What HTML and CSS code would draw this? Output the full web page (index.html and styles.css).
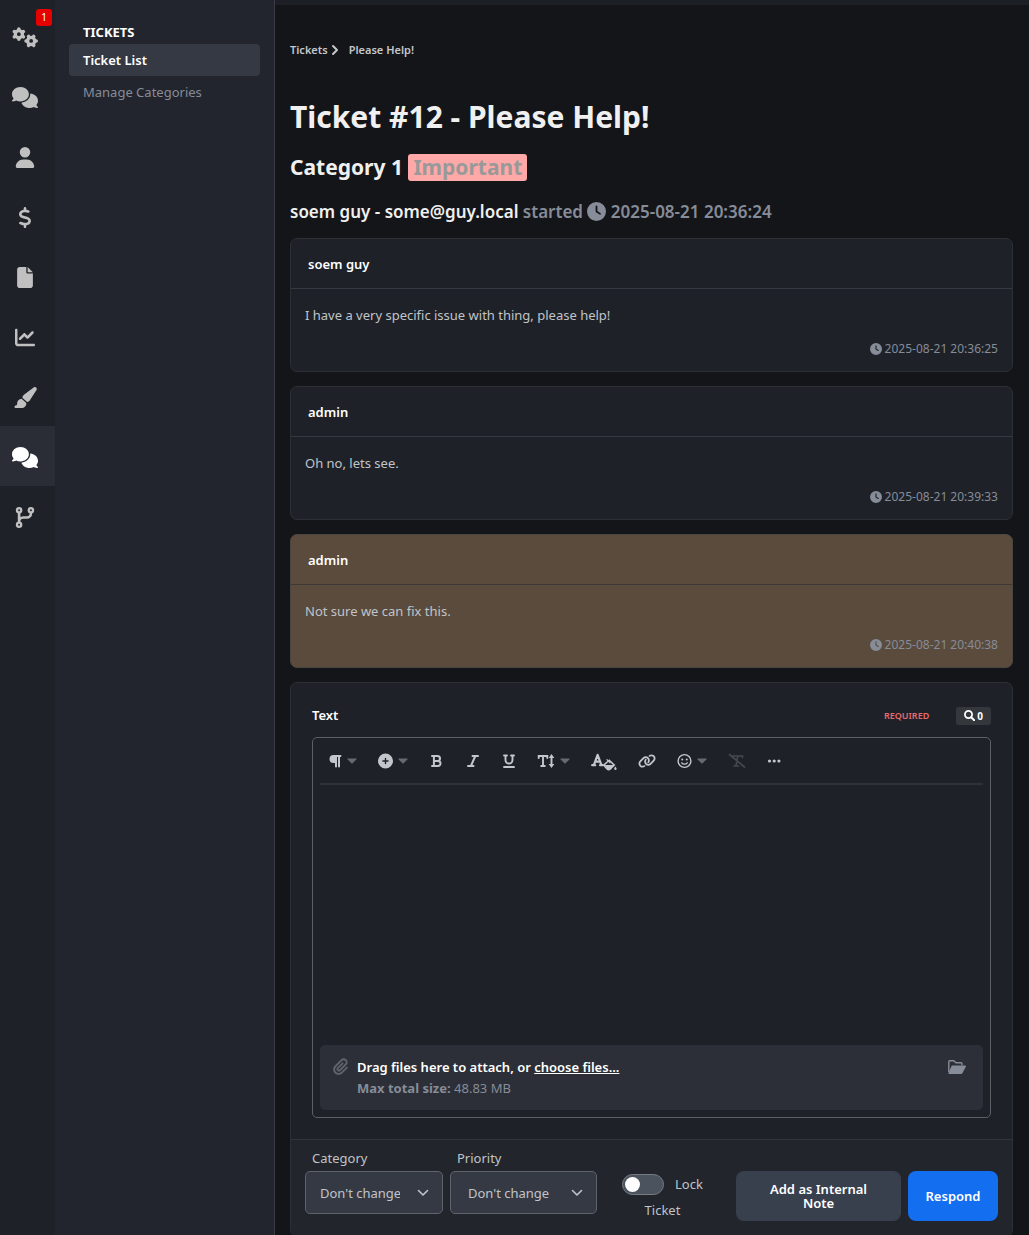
FILE: index.html
```html
<!DOCTYPE html>
<html lang="en">
<head>
<meta charset="utf-8">
<meta name="viewport" content="width=device-width, initial-scale=1">
<title>Ticket #12 - Please Help!</title>
<link rel="stylesheet" href="styles.css">
</head>
<body>
<svg class="sprite" aria-hidden="true">
  <symbol id="i-gears" viewBox="0 0 25 20">
    <g fill="none" stroke="currentColor">
      <circle cx="6.6" cy="6.8" r="3.400" stroke-width="3.200"/>
      <path stroke-width="3.400" stroke-linecap="round" d="M6.600 2.600V1.900M6.600 11v.7M10.200 4.700l.7-.4M10.200 8.900l.7.4M3 4.700l-.7-.4M3 8.900l-.7.4"/>
      <circle cx="18.4" cy="13.3" r="3.400" stroke-width="3.200"/>
      <path stroke-width="3.400" stroke-linecap="round" d="M14.200 13.300h-.7M22.600 13.300h.7M16.300 9.700l-.4-.7M20.500 9.700l.4-.7M16.300 16.900l-.4.7M20.500 16.900l.4.7"/>
    </g>
  </symbol>
  <symbol id="i-comments" viewBox="0 0 640 512"><path d="M208 352c114.900 0 208-78.800 208-176S322.900 0 208 0S0 78.800 0 176c0 38.600 14.700 74.300 39.600 103.400c-3.500 9.400-8.700 17.700-14.200 24.700c-4.800 6.200-9.700 11-13.300 14.300c-1.800 1.600-3.300 2.900-4.300 3.700c-.5 .4-.9 .7-1.100 .8l-.2 .2C1 327.200-1.400 334.400 .8 340.900S9.100 352 16 352c21.800 0 43.800-5.600 62.100-12.500c9.200-3.500 17.800-7.400 25.200-11.400C134.100 343.300 169.800 352 208 352zM448 176c0 112.300-99.100 196.900-216.500 207C255.800 457.400 336.400 512 432 512c38.200 0 73.900-8.700 104.700-23.900c7.500 4 16 7.900 25.200 11.400c18.300 6.900 40.300 12.500 62.100 12.500c6.900 0 13.100-4.500 15.200-11.100c2.100-6.600-.2-13.800-5.800-17.900l-.2-.2c-.2-.2-.6-.4-1.100-.8c-1-.8-2.500-2-4.300-3.700c-3.600-3.300-8.500-8.100-13.300-14.300c-5.500-7-10.700-15.400-14.200-24.700c24.900-29 39.600-64.700 39.600-103.400c0-92.800-84.900-168.900-192.600-175.500c.4 5.100 .6 10.300 .6 15.500z"/></symbol>
  <symbol id="i-user" viewBox="0 0 448 512"><path d="M224 256A128 128 0 1 0 224 0a128 128 0 1 0 0 256zm-45.700 48C79.800 304 0 383.800 0 482.300C0 498.700 13.300 512 29.700 512H418.300c16.400 0 29.700-13.300 29.700-29.700C448 383.800 368.200 304 269.700 304H178.300z"/></symbol>
  <symbol id="i-dollar" viewBox="0 0 320 512"><path d="M160 0c17.700 0 32 14.300 32 32V67.700c1.600 .2 3.100 .4 4.700 .7c.4 .1 .7 .1 1.100 .2l48 8.800c17.400 3.200 28.900 19.900 25.700 37.200s-19.900 28.900-37.200 25.700l-47.500-8.700c-31.300-4.600-58.900-1.500-78.300 6.200s-27.200 18.300-29 28.100c-2 10.700-.5 16.700 1.200 20.400c1.800 3.900 5.500 8.300 12.800 13.200c16.300 10.700 41.300 17.700 73.700 26.300l2.900 .8c28.600 7.600 63.600 16.800 89.600 33.800c14.200 9.300 27.600 21.900 35.900 39.500c8.500 17.900 10.300 37.900 6.400 59.200c-6.900 38-33.100 63.400-65.600 76.700c-13.700 5.600-28.600 9.200-44.400 11V480c0 17.700-14.300 32-32 32s-32-14.300-32-32V445.100c-.4-.1-.9-.1-1.300-.2l-.2 0 0 0c-24.400-3.800-64.500-14.300-91.500-26.300c-16.100-7.200-23.400-26.100-16.200-42.200s26.100-23.400 42.200-16.200c20.900 9.300 55.300 18.500 75.200 21.600c31.900 4.700 58.200 2 76-5.300c16.900-6.900 24.600-16.900 26.800-28.900c1.900-10.600 .4-16.700-1.300-20.400c-1.900-4-5.600-8.400-13-13.300c-16.400-10.700-41.500-17.700-74-26.300l-2.800-.7 0 0C119.400 279.300 84.400 270 58.400 253c-14.200-9.300-27.500-22-35.800-39.600c-8.400-17.900-10.100-37.900-6.100-59.200C23.700 116 52.300 91.200 84.800 78.300c13.300-5.300 27.900-8.900 43.200-11V32c0-17.700 14.300-32 32-32z"/></symbol>
  <symbol id="i-file" viewBox="0 0 384 512"><path d="M0 64C0 28.700 28.700 0 64 0H224V128c0 17.700 14.300 32 32 32H384V448c0 35.300-28.700 64-64 64H64c-35.300 0-64-28.700-64-64V64zm384 64H256V0L384 128z"/></symbol>
  <symbol id="i-chart" viewBox="0 0 512 512"><path d="M64 64c0-17.700-14.300-32-32-32S0 46.300 0 64V400c0 44.200 35.800 80 80 80H480c17.700 0 32-14.300 32-32s-14.300-32-32-32H80c-8.800 0-16-7.200-16-16V64zm406.600 86.600c12.500-12.500 12.500-32.800 0-45.300s-32.800-12.500-45.300 0L320 210.700l-57.400-57.400c-12.500-12.500-32.800-12.500-45.300 0l-112 112c-12.500 12.500-12.500 32.800 0 45.300s32.800 12.500 45.300 0L240 221.300l57.400 57.400c12.500 12.500 32.800 12.500 45.300 0l128-128z"/></symbol>
  <symbol id="i-brush" viewBox="0 0 576 512"><path d="M339.300 367.100c27.300-3.900 51.900-19.400 67.200-42.900L568.200 74.100c12.600-19.500 9.400-45.300-7.600-61.200S517.700-4.400 499.100 9.600L262.400 187.200c-24 18-38.200 46.100-38.400 76.100L339.300 367.100zm-19.600 25.400l-116-104.400C143.900 290.300 96 339.600 96 400c0 3.900 .2 7.800 .6 11.600C98.400 429.100 86.400 448 68.800 448H64c-17.700 0-32 14.300-32 32s14.300 32 32 32H208c61.900 0 112-50.100 112-112c0-2.500-.1-5-.2-7.500z"/></symbol>
  <symbol id="i-branch" viewBox="0 0 448 512"><g fill="none" stroke="currentColor" stroke-width="56"><circle cx="80" cy="80" r="52"/><circle cx="368" cy="80" r="52"/><circle cx="80" cy="432" r="52"/><path stroke-width="64" d="M80 132V380M368 132v28c0 53-43 96-96 96H176c-53 0-96 43-96 96"/></g></symbol>
  <symbol id="i-clock" viewBox="0 0 512 512"><path d="M256 0a256 256 0 1 1 0 512A256 256 0 1 1 256 0zM232 120V256c0 8 4 15.500 10.700 20l96 64c11 7.400 25.900 4.400 33.300-6.700s4.400-25.900-6.700-33.300L280 243.200V120c0-13.300-10.700-24-24-24s-24 10.700-24 24z"/></symbol>
  <symbol id="i-angle" viewBox="0 0 8 12"><path d="M2 2l4 4-4 4" fill="none" stroke="currentColor" stroke-width="2" stroke-linecap="round" stroke-linejoin="round"/></symbol>
  <symbol id="i-caret" viewBox="0 0 10 6"><path d="M1 .5h8c.6 0 .8.6.4 1L5.600 5.300a.9.9 0 0 1-1.200 0L.6 1.500C.2 1.100.4.5 1 .5z"/></symbol>
  <symbol id="i-down" viewBox="0 0 12 8"><path d="M1.500 1.500L6 6l4.500-4.500" fill="none" stroke="currentColor" stroke-width="1.600" stroke-linecap="round" stroke-linejoin="round"/></symbol>
  <symbol id="i-paragraph" viewBox="0 0 14 16"><path d="M5.500 2h7a1 1 0 0 1 0 2H12v9.500a1 1 0 0 1-2 0V4H9v9.500a1 1 0 0 1-2 0V10H5.500a4 4 0 0 1 0-8z"/></symbol>
  <symbol id="i-plus" viewBox="0 0 512 512"><path d="M256 512A256 256 0 1 0 256 0a256 256 0 1 0 0 512zM232 344V280H168c-13.300 0-24-10.700-24-24s10.700-24 24-24h64V168c0-13.300 10.700-24 24-24s24 10.700 24 24v64h64c13.300 0 24 10.700 24 24s-10.700 24-24 24H280v64c0 13.300-10.700 24-24 24s-24-10.700-24-24z"/></symbol>
  <symbol id="i-bold" viewBox="0 0 13 16"><path d="M2 3h5.500a2.500 2.500 0 0 1 0 5H4M7.500 8H8a2.500 2.500 0 0 1 0 5H2M3.900 3v10" fill="none" stroke="currentColor" stroke-width="2" stroke-linecap="round"/></symbol>
  <symbol id="i-italic" viewBox="0 0 16 16"><path d="M7.500 3H13M3 13h5.500M10.300 3L5.900 13" fill="none" stroke="currentColor" stroke-width="2" stroke-linecap="round"/></symbol>
  <symbol id="i-underline" viewBox="0 0 14 16"><path d="M2 2.500h3M9 2.500h3M3.500 2.500V7a3.500 3.500 0 0 0 7 0V2.500M2 14h10" fill="none" stroke="currentColor" stroke-width="1.900" stroke-linecap="round"/></symbol>
  <symbol id="i-height" viewBox="0 0 17 16"><path d="M1.200 5V3h8.600v2M5.500 3v10M3.700 13h3.600M14 4v8" fill="none" stroke="currentColor" stroke-width="1.900" stroke-linecap="round"/><path d="M14 1l2.800 4h-5.600zM14 15l2.800-4h-5.600z"/></symbol>
  <symbol id="i-color" viewBox="0 0 26 20"><path d="M1.200 14.200h3M9 14.200h3M2.800 14.200L6.600 3.800 10.500 14.200M4.200 10.700h4.800" fill="none" stroke="currentColor" stroke-width="2.200" stroke-linecap="round" stroke-linejoin="round"/><path d="M18.300 9.300l5 4.800-4.200 4c-.8.800-2 .8-2.800 0L13.800 15.500c-.7-.7-.7-1.700 0-2.400z" fill="none" stroke="currentColor" stroke-width="1.500"/><path d="M13.500 14h9.500l-4 4.200c-.8.800-2 .8-2.800 0zM15.200 8.800l.9-.9 3.800 3.800-.9.900zM24.400 15.500c.8 1.100 1.200 1.700 1.200 2.200a1.200 1.200 0 0 1-2.400 0c0-.5.4-1.100 1.200-2.200z"/></symbol>
  <symbol id="i-link" viewBox="0 0 640 512"><path d="M579.800 267.700c56.500-56.500 56.500-148 0-204.500c-50-50-128.800-56.500-186.300-15.400l-1.600 1.100c-14.400 10.300-17.700 30.300-7.400 44.600s30.300 17.700 44.600 7.400l1.600-1.100c32.100-22.900 76-19.300 103.800 8.600c31.500 31.500 31.500 82.500 0 114L422.300 334.800c-31.500 31.500-82.500 31.500-114 0c-27.900-27.900-31.500-71.800-8.600-103.800l1.100-1.600c10.300-14.400 6.900-34.400-7.400-44.600s-34.400-6.900-44.600 7.400l-1.100 1.600C206.500 251.200 213 330 263 380c56.500 56.500 148 56.500 204.500 0L579.800 267.700zM60.200 244.300c-56.500 56.500-56.500 148 0 204.500c50 50 128.800 56.500 186.300 15.400l1.600-1.100c14.400-10.300 17.700-30.300 7.400-44.600s-30.300-17.700-44.600-7.400l-1.600 1.100c-32.100 22.900-76 19.300-103.800-8.600C74 372 74 321 105.500 289.500L217.700 177.200c31.500-31.500 82.500-31.500 114 0c27.900 27.900 31.500 71.800 8.600 103.900l-1.100 1.600c-10.300 14.400-6.900 34.400 7.400 44.600s34.400 6.900 44.600-7.400l1.100-1.600C433.500 260.800 427 182 377 132c-56.500-56.500-148-56.500-204.500 0L60.200 244.300z"/></symbol>
  <symbol id="i-smile" viewBox="0 0 16 16"><circle cx="8" cy="8" r="6.800" fill="none" stroke="currentColor" stroke-width="1.500"/><circle cx="5.600" cy="6.400" r="1.100"/><circle cx="10.400" cy="6.400" r="1.100"/><path d="M5 10c1.500 1.900 4.500 1.900 6 0" fill="none" stroke="currentColor" stroke-width="1.400" stroke-linecap="round"/></symbol>
  <symbol id="i-clear" viewBox="0 0 18 16"><path d="M4.500 4.500V3h10v1.500M9.800 3L8 13M6 13h4.500M1.500 1.500l15 12.500" fill="none" stroke="currentColor" stroke-width="1.700" stroke-linecap="round"/></symbol>
  <symbol id="i-dots" viewBox="0 0 14 16"><circle cx="2.500" cy="8" r="1.600"/><circle cx="7.200" cy="8" r="1.600"/><circle cx="11.900" cy="8" r="1.600"/></symbol>
  <symbol id="i-search" viewBox="0 0 11 11"><circle cx="4.500" cy="4.500" r="3.600" fill="none" stroke="currentColor" stroke-width="1.700"/><path d="M7.200 7.200l3 3" stroke="currentColor" stroke-width="2" stroke-linecap="round"/></symbol>
  <symbol id="i-clip" viewBox="0 0 448 512"><path d="M364.200 83.800c-24.400-24.400-64-24.400-88.400 0l-184 184c-42.100 42.100-42.100 110.300 0 152.400s110.300 42.100 152.400 0l152-152c10.900-10.900 28.700-10.900 39.600 0s10.900 28.700 0 39.600l-152 152c-64 64-167.600 64-231.600 0s-64-167.600 0-231.600l184-184c46.300-46.300 121.300-46.300 167.600 0s46.300 121.300 0 167.600l-176 176c-28.600 28.600-75 28.600-103.600 0s-28.600-75 0-103.600l144-144c10.900-10.900 28.700-10.900 39.600 0s10.900 28.700 0 39.600l-144 144c-6.700 6.700-6.700 17.700 0 24.400s17.700 6.700 24.400 0l176-176c24.400-24.400 24.400-64 0-88.400z"/></symbol>
  <symbol id="i-folder" viewBox="0 0 18 14"><path d="M.8 12V1.800c0-.6.400-1 1-1h4l2 2H13c.6 0 1 .4 1 1v1.400" fill="none" stroke="currentColor" stroke-width="1.400"/><path d="M4.600 5.500H17c.8 0 1.200.7.800 1.300l-3.300 6.300c-.3.600-.8.900-1.400.9H1c-.5 0-.8-.4-.5-.9l3-7c.2-.4.600-.6 1.100-.6z"/></symbol>
</svg>

<div class="app">
  <nav class="rail" aria-label="Main">
    <a class="rail-item" href="#" aria-label="Settings, 1 notification"><svg class="icon gears"><use href="#i-gears"/></svg><span class="rail-badge">1</span></a>
    <a class="rail-item" href="#" aria-label="Discussions"><svg class="icon wide"><use href="#i-comments"/></svg></a>
    <a class="rail-item" href="#" aria-label="Users"><svg class="icon"><use href="#i-user"/></svg></a>
    <a class="rail-item" href="#" aria-label="Payments"><svg class="icon"><use href="#i-dollar"/></svg></a>
    <a class="rail-item" href="#" aria-label="Pages"><svg class="icon"><use href="#i-file"/></svg></a>
    <a class="rail-item" href="#" aria-label="Statistics"><svg class="icon"><use href="#i-chart"/></svg></a>
    <a class="rail-item" href="#" aria-label="Appearance"><svg class="icon wide"><use href="#i-brush"/></svg></a>
    <a class="rail-item active" href="#" aria-label="Tickets" aria-current="page"><svg class="icon wide"><use href="#i-comments"/></svg></a>
    <a class="rail-item" href="#" aria-label="Versions"><svg class="icon"><use href="#i-branch"/></svg></a>
  </nav>

  <nav class="submenu" aria-label="Tickets">
    <div class="submenu-title">TICKETS</div>
    <a class="submenu-link active" href="#">Ticket List</a>
    <a class="submenu-link" href="#">Manage Categories</a>
  </nav>

  <main class="content">
    <nav class="crumbs" aria-label="Breadcrumb">
      <a href="#">Tickets</a><svg class="crumb-sep"><use href="#i-angle"/></svg><a href="#">Please Help!</a>
    </nav>
    <h1 class="title">Ticket #12 - Please Help!</h1>
    <h2 class="category">Category 1 <span class="priority">Important</span></h2>
    <h3 class="started"><strong>soem guy - some@guy.local</strong> started <svg class="clock"><use href="#i-clock"/></svg> <time>2025-08-21 20:36:24</time></h3>

    <article class="card message">
      <header class="message-author">soem guy</header>
      <p class="message-text">I have a very specific issue with thing, please help!</p>
      <footer class="message-time"><svg class="clock"><use href="#i-clock"/></svg><time>2025-08-21 20:36:25</time></footer>
    </article>
    <article class="card message">
      <header class="message-author">admin</header>
      <p class="message-text">Oh no, lets see.</p>
      <footer class="message-time"><svg class="clock"><use href="#i-clock"/></svg><time>2025-08-21 20:39:33</time></footer>
    </article>
    <article class="card message internal">
      <header class="message-author">admin</header>
      <p class="message-text">Not sure we can fix this.</p>
      <footer class="message-time"><svg class="clock"><use href="#i-clock"/></svg><time>2025-08-21 20:40:38</time></footer>
    </article>

    <form class="card reply">
      <div class="reply-body">
        <div class="reply-head">
          <label class="reply-label" for="text">Text</label>
          <span class="required">REQUIRED</span>
          <button class="preview" type="button" aria-label="Search, 0"><svg class="search"><use href="#i-search"/></svg>0</button>
        </div>
        <div class="editor">
          <div class="toolbar" role="toolbar">
            <button class="tool" type="button" aria-label="Format"><svg class="w14"><use href="#i-paragraph"/></svg><svg class="caret"><use href="#i-caret"/></svg></button>
            <button class="tool" type="button" aria-label="Insert"><svg class="w15"><use href="#i-plus"/></svg><svg class="caret"><use href="#i-caret"/></svg></button>
            <button class="tool" type="button" aria-label="Bold"><svg class="w15"><use href="#i-bold"/></svg></button>
            <button class="tool" type="button" aria-label="Italic"><svg class="w16"><use href="#i-italic"/></svg></button>
            <button class="tool" type="button" aria-label="Underline"><svg class="w14"><use href="#i-underline"/></svg></button>
            <button class="tool" type="button" aria-label="Size"><svg class="w18"><use href="#i-height"/></svg><svg class="caret"><use href="#i-caret"/></svg></button>
            <button class="tool" type="button" aria-label="Color"><svg class="color"><use href="#i-color"/></svg></button>
            <button class="tool" type="button" aria-label="Link"><svg class="w18"><use href="#i-link"/></svg></button>
            <button class="tool" type="button" aria-label="Emoji"><svg class="w15"><use href="#i-smile"/></svg><svg class="caret"><use href="#i-caret"/></svg></button>
            <button class="tool" type="button" aria-label="Clear formatting" disabled><svg class="w18"><use href="#i-clear"/></svg></button>
            <button class="tool" type="button" aria-label="More"><svg class="w14"><use href="#i-dots"/></svg></button>
          </div>
          <textarea class="editor-text" id="text"></textarea>
          <div class="dropzone">
            <svg class="clip"><use href="#i-clip"/></svg>
            <div class="drop-text">
              <div class="drop-main">Drag files here to attach, or <a href="#">choose files...</a></div>
              <div class="drop-size"><b>Max total size:</b> 48.83 MB</div>
            </div>
            <button class="browse" type="button" aria-label="Browse files"><svg class="folder"><use href="#i-folder"/></svg></button>
          </div>
        </div>
      </div>
      <div class="reply-footer">
        <div class="field field-category">
          <label for="category">Category</label>
          <div class="select-wrap"><select id="category"><option>Don't change</option></select><svg class="down"><use href="#i-down"/></svg></div>
        </div>
        <div class="field field-priority">
          <label for="priority">Priority</label>
          <div class="select-wrap"><select id="priority"><option>Don't change</option></select><svg class="down"><use href="#i-down"/></svg></div>
        </div>
        <div class="lock"><input class="switch" type="checkbox" role="switch" id="lock"><label for="lock">Lock Ticket</label></div>
        <button class="btn btn-note" type="button">Add as Internal Note</button>
        <button class="btn btn-send" type="submit">Respond</button>
      </div>
    </form>
  </main>
</div>
</body>
</html>
```
FILE: styles.css
```css
* { box-sizing: border-box; }

body {
  margin: 0;
  background: #141518;
  color: #c0c4c9;
  font-family: "Noto Sans", "Open Sans", sans-serif;
  font-size: 13px;
  line-height: 20px;
}

a { color: inherit; text-decoration: none; }
button, select, textarea { font: inherit; color: inherit; }
button { padding: 0; border: 0; background: none; }
svg { fill: currentColor; flex: none; }
.sprite { position: absolute; width: 0; height: 0; }

.app { display: flex; min-height: 100vh; }

/* Icon rail */
.rail { flex: none; width: 55px; padding-top: 6px; background: #1e2128; }
.rail-item {
  position: relative;
  display: flex;
  align-items: center;
  justify-content: center;
  height: 60px;
  padding: 3px 5px 0 0;
  color: #c0c0c0;
}
.rail-item.active { background: #2a2d35; color: #fff; }
.icon { width: 20px; height: 21px; }
.icon.wide { width: 26px; }
.icon.gears { width: 26px; }
.rail-badge {
  position: absolute;
  top: 3px;
  right: 3px;
  width: 16px;
  border-radius: 3px;
  background: #e60000;
  color: #fff;
  font-size: 10px;
  line-height: 17px;
  text-align: center;
}

/* Section menu */
.submenu {
  flex: none;
  width: 220px;
  padding: 20px 14px;
  border-right: 1px solid #3a3d44;
  background: #22252d;
}
.submenu-title { padding: 0 14px; color: #fff; font-weight: 700; line-height: 24px; }
.submenu-link {
  display: block;
  padding: 1px 14px 0;
  border-radius: 4px;
  color: #868c98;
  line-height: 31px;
}
.submenu-link.active { background: #353944; color: #fff; font-weight: 600; }

/* Main column */
.content {
  flex: 1;
  min-width: 0;
  padding: 35px 16px 0 15px;
  border-top: 5px solid #1d1f27;
}
.crumbs { display: flex; align-items: center; color: #c4c7cb; font-size: 11px; font-weight: 600; }
.crumb-sep { width: 8px; height: 12px; margin: 0 10px 0 3px; }
.title { margin: 36px 0 0; color: #f0f0f0; font-size: 30px; font-weight: 700; line-height: 42px; }
.category { margin: 15px 0 0; color: #f0f0f0; font-size: 21px; font-weight: 700; line-height: 28px; }
.priority {
  display: inline-block;
  padding: 0 5px;
  border-radius: 3px;
  background: #ffa8a8;
  color: #999;
  line-height: 27px;
}
.started { margin: 20px 0 15px; color: #868c98; font-size: 17px; font-weight: 600; line-height: 22px; }
.started strong { color: #f0f0f0; font-weight: 600; }
.started .clock { width: 19px; height: 19px; vertical-align: -3px; }

.card { border: 1px solid #2c2f36; border-radius: 7px; background: #1e2127; }
.message { margin-bottom: 14px; }
.message-author {
  padding: 15px 17px 14px;
  border-bottom: 1px solid #363941;
  color: #fff;
  font-weight: 600;
}
.message-text { margin: 0; padding: 16px 14px 0; }
.message-time {
  display: flex;
  align-items: center;
  justify-content: flex-end;
  gap: 3px;
  padding: 14px 14px 12px;
  color: #868c98;
  font-size: 12px;
}
.message-time .clock { width: 12px; height: 12px; }
.message.internal { border-color: #4b4640; background: #5a4b3d; }
.message.internal .message-author { border-color: #3c3835; }

/* Reply form */
.reply-body { padding: 20px 21px 21px; }
.reply-head { display: flex; align-items: center; margin-bottom: 9px; line-height: 25px; }
.reply-label { flex: 1; color: #fff; font-weight: 600; }
.required { margin-right: 27px; color: #e86a6e; font-size: 9px; font-weight: 600; }
.preview {
  display: flex;
  align-items: center;
  gap: 2px;
  padding: 0 8px;
  border-radius: 3px;
  background: #34373c;
  color: #fff;
  font-size: 10px;
  font-weight: 700;
  line-height: 18px;
}
.search { width: 11px; height: 11px; }

.editor { padding: 7px; border: 1px solid #5b5f66; border-radius: 5px; background: #1e2127; }
.toolbar {
  display: flex;
  gap: 21px;
  height: 40px;
  padding: 0 8px;
  border-bottom: 2px solid #2e3138;
  color: #c3c7cb;
}
.tool { display: flex; align-items: center; gap: 5px; height: 31px; }
.tool svg { height: 16px; }
.tool:disabled { color: #44484e; }
.w14 { width: 14px; }
.w15 { width: 15px; }
.w16 { width: 16px; }
.w18 { width: 18px; }
.tool .color { width: 26px; height: 20px; }
.tool .caret { width: 10px; height: 6px; color: #666a70; }
.editor-text {
  display: block;
  width: 100%;
  height: 260px;
  padding: 10px;
  border: 0;
  outline: 0;
  background: transparent;
  resize: none;
}
.dropzone { display: flex; align-items: flex-start; padding: 12px 17px 11px 13px; border-radius: 5px; background: #2c2f37; color: #868c98; }
.clip { width: 15px; height: 17px; margin: 1px 9px 0 0; color: #5f646d; }
.drop-text { flex: 1; line-height: 21px; }
.drop-main { color: #fff; font-weight: 600; }
.drop-main a { text-decoration: underline; }
.folder { display: block; width: 18px; height: 14px; margin-top: 3px; }

.reply-footer {
  display: flex;
  align-items: flex-start;
  gap: 7px;
  padding: 8px 14px 14px;
  border-top: 1px solid #32353c;
  border-radius: 0 0 7px 7px;
  background: #22252b;
}
.field label { display: block; padding-left: 7px; line-height: 20px; }
.field-category { flex: 0 1 138px; }
.field-priority { flex: 0 1 147px; }
.select-wrap { position: relative; margin-top: 3px; }
.select-wrap select {
  width: 100%;
  height: 43px;
  padding: 0 42px 0 14px;
  border: 1px solid #5f636b;
  border-radius: 5px;
  background: #353944;
  appearance: none;
}
.field-priority select { padding-left: 17px; }
.down { position: absolute; top: 18px; right: 14px; width: 12px; height: 8px; pointer-events: none; }
.lock { flex: 1 1 100px; padding: 0 14px 0 6px; margin-top: 24px; text-align: center; line-height: 24px; }
.switch {
  width: 42px;
  height: 21px;
  margin: 0 11px 3px 0;
  padding: 2px;
  border: 1px solid #777c83;
  border-radius: 11px;
  background: #4a535e;
  appearance: none;
  vertical-align: middle;
}
.switch::before { content: ""; display: block; width: 15px; height: 15px; border-radius: 50%; background: #fff; }
.switch:checked::before { margin-left: auto; }
.btn {
  min-height: 50px;
  margin-top: 23px;
  padding: 0 16px;
  border-radius: 8px;
  color: #fff;
  font-weight: 600;
  line-height: 14px;
}
.btn-note { flex: 0 1 165px; padding: 0 30px; background: #38404d; }
.btn-send { flex: 0 0 90px; background: #146ef0; }
```
